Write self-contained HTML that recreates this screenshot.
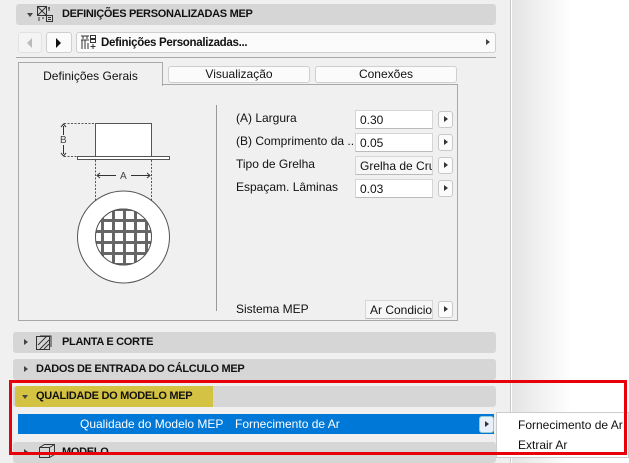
<!DOCTYPE html>
<html><head><meta charset="utf-8"><style>
*{box-sizing:border-box;margin:0;padding:0}
body{width:629px;height:463px;overflow:hidden;background:#fff;font-family:"Liberation Sans",sans-serif;font-size:12px;color:#111;position:relative}
.abs{position:absolute}
#panel{left:0;top:0;width:511px;height:463px;background:#f0f0f0;border-right:1px solid #c8c8c8}
#shade{left:512px;top:0;width:60px;height:463px;background:linear-gradient(to right,#e4e4e4,#fff)}
.bar{background:#d6d6d6;border-radius:3px;height:21px}
.bt{font-weight:bold;font-size:11px;letter-spacing:-0.3px}
.tri{width:0;height:0;border-left:4px solid #444;border-top:3.5px solid transparent;border-bottom:3.5px solid transparent}
.trid{width:0;height:0;border-top:4px solid #444;border-left:3.5px solid transparent;border-right:3.5px solid transparent}
.btn{background:#fbfbfb;border:1px solid #cfcfcf;border-radius:3px}
.field{background:#fff;border:1px solid #d6d6d6;border-bottom-color:#bbb;height:19px;padding:2px 0 0 4px;font-size:12px;overflow:hidden;white-space:nowrap}
.ab{width:15px;height:17px;background:#fbfbfb;border:1px solid #c8c8c8;border-radius:3px}
.ab:after{content:"";position:absolute;left:5px;top:4px;border-left:4px solid #333;border-top:3.5px solid transparent;border-bottom:3.5px solid transparent}
.lbl{font-size:12px}
</style></head><body>
<div id="panel" class="abs"></div>
<div id="shade" class="abs"></div>

<!-- header -->
<div class="abs bar" style="left:16px;top:4px;width:480px;height:21px"></div>
<div class="abs trid" style="left:27px;top:13px"></div>
<svg class="abs" style="left:37px;top:6px" width="16" height="16" viewBox="0 0 16 16" fill="none" stroke="#333" stroke-width="1"><rect x="0.5" y="0.5" width="9" height="9"/><path d="M1 1l8 8M9 1l-8 8"/><path d="M12 1v4M11 2h2"/><rect x="9.5" y="9.5" width="6" height="6"/><path d="M11 11.5h3M11 13.5h3M1 12h2M1 14h2M5 12h2"/></svg>
<div class="abs bt" style="left:62px;top:8px">DEFINIÇÕES PERSONALIZADAS MEP</div>

<!-- nav row -->
<div class="abs btn" style="left:18px;top:32px;width:24px;height:21px;background:#f4f4f4;border-color:#e2e2e2"></div>
<div class="abs" style="left:27px;top:38px;border-right:5px solid #bbb;border-top:5px solid transparent;border-bottom:5px solid transparent"></div>
<div class="abs btn" style="left:46px;top:32px;width:26px;height:21px"></div>
<div class="abs" style="left:56px;top:38px;border-left:5px solid #111;border-top:5px solid transparent;border-bottom:5px solid transparent"></div>
<div class="abs btn" style="left:76px;top:32px;width:420px;height:21px"></div>
<svg class="abs" style="left:80px;top:35px" width="16" height="16" viewBox="0 0 16 16" fill="none" stroke="#333" stroke-width="1"><path d="M1 1h8M3 1v3M7 1v3M1 5h8M2 5v9M5 5v9M8 8v6"/><rect x="10.5" y="0.5" width="5" height="3"/><rect x="10.5" y="4.5" width="5" height="3"/><path d="M13 9v5M10.5 11.5h5"/></svg>
<div class="abs bt" style="left:101px;top:37px;font-size:11.5px">Definições Personalizadas...</div>
<div class="abs" style="left:486px;top:39px;border-left:4px solid #444;border-top:3.5px solid transparent;border-bottom:3.5px solid transparent"></div>
<div class="abs" style="left:16px;top:57px;width:480px;height:1px;background:#a8a8a8"></div>

<!-- tabs -->
<div class="abs" style="left:18px;top:84px;width:440px;height:237px;border:1px solid #a8a8a8"></div>
<div class="abs" style="left:18px;top:62px;width:145px;height:24px;border:1px solid #a8a8a8;border-bottom:none;background:#f0f0f0"></div>
<div class="abs" style="left:18px;top:69px;width:145px;text-align:center">Definições Gerais</div>
<div class="abs btn" style="left:168px;top:66px;width:142px;height:17px"></div>
<div class="abs" style="left:168px;top:67px;width:142px;text-align:center">Visualização</div>
<div class="abs btn" style="left:315px;top:66px;width:142px;height:17px"></div>
<div class="abs" style="left:315px;top:67px;width:142px;text-align:center">Conexões</div>

<!-- drawing -->
<svg class="abs" style="left:30px;top:110px" width="150" height="200" viewBox="0 0 150 200" fill="none" stroke="#555" stroke-width="1">
<rect x="65.5" y="13.5" width="56" height="33" fill="#fff"/>
<rect x="47.5" y="46.5" width="92" height="3" fill="#fff"/>
<path d="M34 13.5h31M34 46.5h14M65.5 50v68M121.5 50v68" stroke-dasharray="2 1.5"/>
<path d="M33.5 16v9M33.5 35v9M31 17l2.5-3 2.5 3M31 43l2.5 3 2.5-3" stroke="#333"/>
<text x="30" y="33" font-family="Liberation Sans" font-size="10" fill="#444" stroke="none">B</text>
<path d="M68 65.5h18M101 65.5h18M70 63l-3 2.5 3 2.5M117 63l3 2.5-3 2.5" stroke="#333"/>
<text x="90" y="69" font-family="Liberation Sans" font-size="10" fill="#444" stroke="none">A</text>
<circle cx="93.5" cy="127" r="46" fill="#fff"/>
<clipPath id="c"><circle cx="93.5" cy="127" r="28"/></clipPath>
<circle cx="93.5" cy="127" r="28" fill="#666" stroke="#555"/>
<g clip-path="url(#c)" fill="#fff" stroke="none">
<g id="row"><rect x="63" y="0" width="8" height="8"/><rect x="74" y="0" width="8" height="8"/><rect x="85" y="0" width="8" height="8"/><rect x="96" y="0" width="8" height="8"/><rect x="107" y="0" width="8" height="8"/><rect x="118" y="0" width="8" height="8"/></g>
<use href="#row" y="101"/><use href="#row" y="112"/><use href="#row" y="123"/><use href="#row" y="134"/><use href="#row" y="145"/><use href="#row" y="156"/><use href="#row" y="90"/>
</g>
<circle cx="93.5" cy="127" r="28" stroke="#555"/>
</svg>
<div class="abs" style="left:216px;top:105px;width:1px;height:206px;background:#999"></div>

<!-- params -->
<div class="abs lbl" style="left:236px;top:111px">(A) Largura</div>
<div class="abs field" style="left:355px;top:110px;width:78px">0.30</div>
<div class="abs ab" style="left:438px;top:111px"></div>
<div class="abs lbl" style="left:236px;top:134px">(B) Comprimento da ...</div>
<div class="abs field" style="left:355px;top:133px;width:78px">0.05</div>
<div class="abs ab" style="left:438px;top:134px"></div>
<div class="abs lbl" style="left:236px;top:157px">Tipo de Grelha</div>
<div class="abs field" style="left:355px;top:156px;width:78px;background:#f6f6f6">Grelha de Cruz</div>
<div class="abs ab" style="left:438px;top:157px"></div>
<div class="abs lbl" style="left:236px;top:180px">Espaçam. Lâminas</div>
<div class="abs field" style="left:355px;top:179px;width:78px">0.03</div>
<div class="abs ab" style="left:438px;top:180px"></div>
<div class="abs lbl" style="left:236px;top:302px">Sistema MEP</div>
<div class="abs field" style="left:365px;top:300px;width:68px;background:#f6f6f6">Ar Condicionado</div>
<div class="abs ab" style="left:438px;top:301px"></div>

<!-- sections -->
<div class="abs bar" style="left:13px;top:332px;width:483px"></div>
<div class="abs tri" style="left:24px;top:339px"></div>
<svg class="abs" style="left:36px;top:334px" width="18" height="17" viewBox="0 0 18 17" fill="none" stroke="#333"><rect x="0.5" y="2.5" width="13" height="13"/><path d="M4 15l9-9M8 15l5-5M2 11l9-9M4 2h11v11" stroke-width="1"/></svg>
<div class="abs bt" style="left:62px;top:336px">PLANTA E CORTE</div>
<div class="abs bar" style="left:13px;top:359px;width:483px"></div>
<div class="abs tri" style="left:24px;top:366px"></div>
<div class="abs bt" style="left:36px;top:363px">DADOS DE ENTRADA DO CÁLCULO MEP</div>
<div class="abs bar" style="left:13px;top:386px;width:483px"></div>
<div class="abs" style="left:15px;top:386px;width:198px;height:21px;background:#d4c242;border-radius:3px 0 0 3px"></div>
<div class="abs trid" style="left:22px;top:395px"></div>
<div class="abs bt" style="left:36px;top:390px">QUALIDADE DO MODELO MEP</div>
<div class="abs" style="left:18px;top:414px;width:476px;height:20px;background:#0078d7"></div>
<div class="abs" style="left:80px;top:417px;color:#fff">Qualidade do Modelo MEP</div>
<div class="abs" style="left:235px;top:417px;color:#fff">Fornecimento de Ar</div>
<div class="abs ab" style="left:479px;top:416px;background:#e8f1fb;border-color:#9cc"></div>
<div class="abs bar" style="left:13px;top:442px;width:483px"></div>
<div class="abs tri" style="left:24px;top:449px"></div>
<svg class="abs" style="left:38px;top:443px" width="18" height="18" viewBox="0 0 18 18" fill="none" stroke="#333"><path d="M1.5 4.5l5-3h10v10l-5 3h-10zM1.5 4.5h10v10M11.5 4.5l5-3"/></svg>
<div class="abs bt" style="left:62px;top:446px">MODELO</div>

<!-- popup -->
<div class="abs" style="left:496px;top:412px;width:133px;height:46px;background:#fff;border:1px solid #ccc"></div>
<div class="abs" style="left:518px;top:418px">Fornecimento de Ar</div>
<div class="abs" style="left:518px;top:438px">Extrair Ar</div>

<!-- red box -->
<div class="abs" style="left:9px;top:380px;width:618px;height:75px;border:3px solid #e8000a"></div>
</body></html>
